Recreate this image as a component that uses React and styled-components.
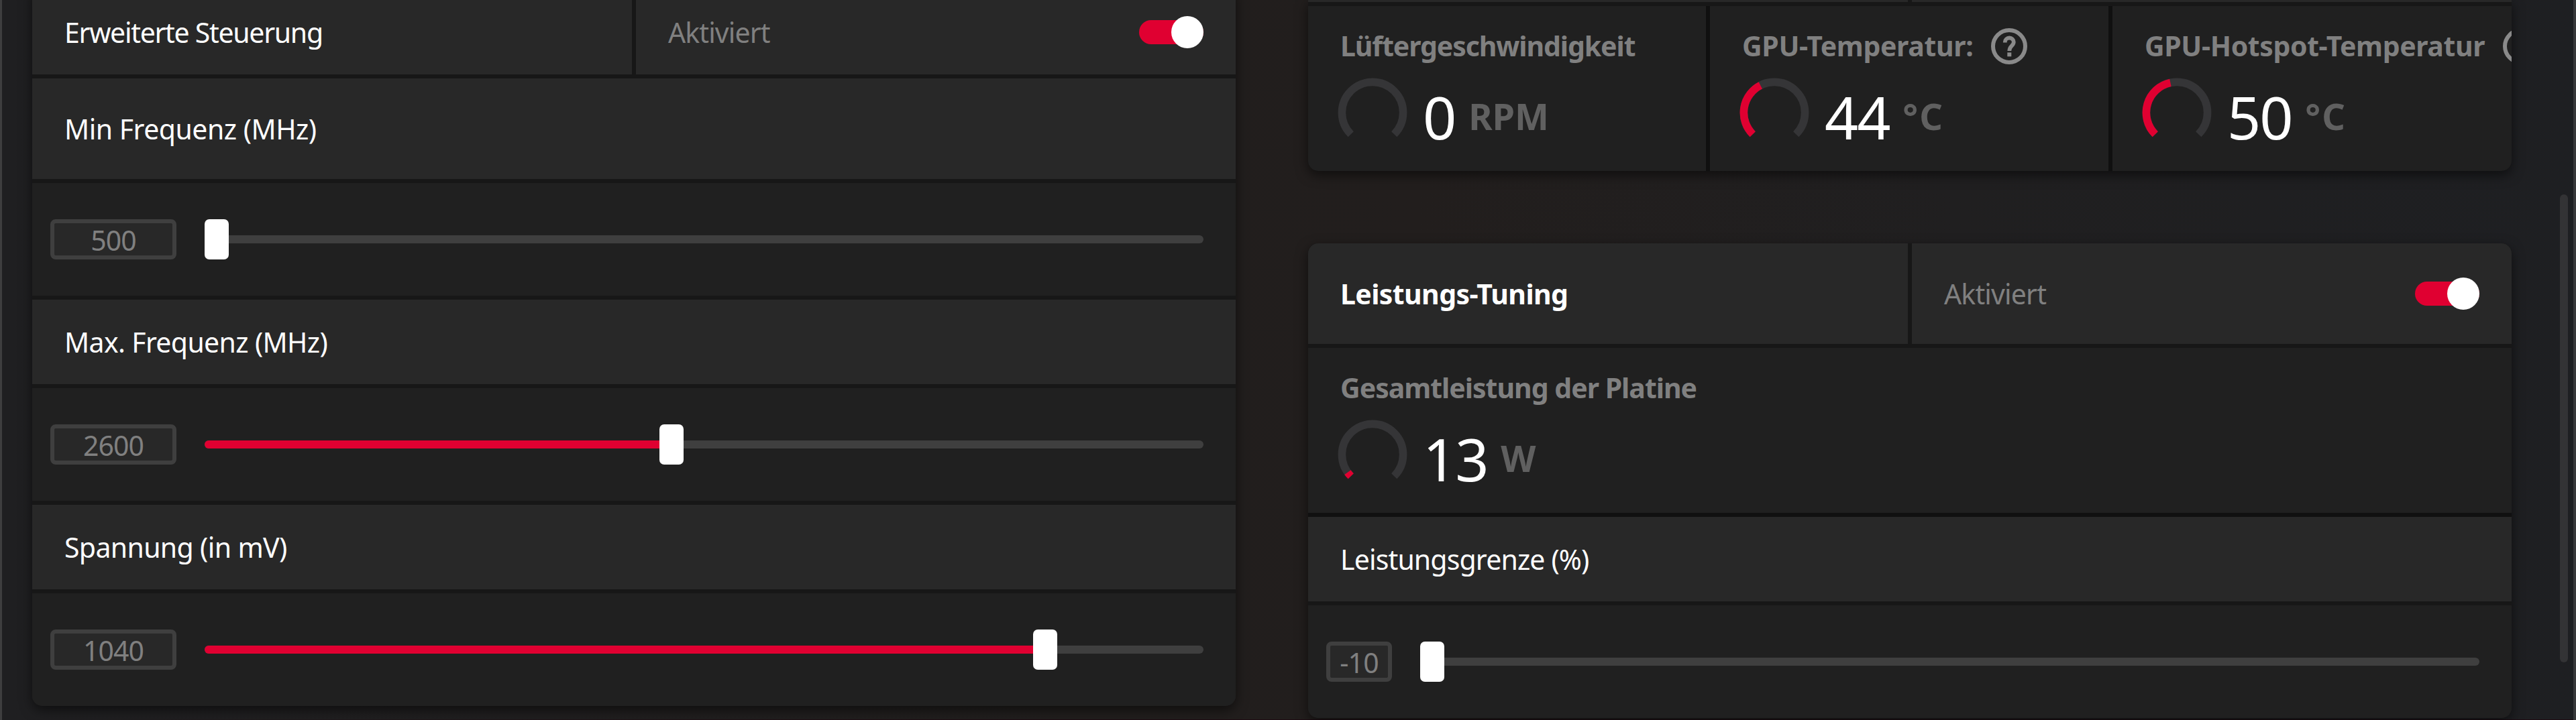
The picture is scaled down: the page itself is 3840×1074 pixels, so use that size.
import React, { useState } from "react";
import styled, { createGlobalStyle } from "styled-components";

const GlobalStyle = createGlobalStyle`
  body {
    margin: 0;
    background: #1f1e20;
  }

  * {
    box-sizing: border-box;
  }
`

const Window = styled.div`
  display: flex;
  align-items: flex-start;
  width: 3840px;
  height: 1074px;
  padding-left: 45px;
  border-left: 3px solid #3e3e3f;
  border-right: 4px solid #38383a;
  overflow: hidden;
  font-family: 'Noto Sans', 'Open Sans', sans-serif;
  font-size: 41px;
  color: #fff;
  background:
    linear-gradient(90deg, transparent 0%, #1d0a11 40%, #1d0a11 100%) bottom / 100% 1px no-repeat,
    linear-gradient(90deg, #1f1f21 0%, #211e1d 42%, #221e1d 55%, #201f20 76%, #1e1f22 100%);
`

const Column = styled.div`
  display: flex;
  flex-direction: column;
  gap: 108px;
  width: 1794px;
  margin-right: ${props => props.$last ? '72px' : '108px'};
`

const Panel = styled.section`
  border-radius: ${props => props.$scrolled ? '0 0 15px 15px' : '15px'};
  margin-top: ${props => props.$offset || 0}px;
  background: #202020;
  box-shadow: 0 6px 18px rgba(0, 0, 0, 0.55);
  overflow: hidden;
`

const HeaderRow = styled.div`
  display: grid;
  grid-template-columns: 894px 894px;
  column-gap: 6px;
  height: ${props => props.$height}px;
  background: #171717;
  border-bottom: 6px solid #171717;
`

const HeaderCell = styled.div`
  display: flex;
  align-items: center;
  justify-content: space-between;
  padding: 0 48px;
  background: #282828;
`

const TitleRow = styled.div`
  display: flex;
  align-items: center;
  height: ${props => props.$height}px;
  padding: 0 48px;
  background: #282828;
  border-bottom: 6px solid #171717;
`

const Text = styled.span`
  line-height: 60px;
  white-space: nowrap;
  font-weight: ${props => props.$bold ? 700 : 400};
  letter-spacing: ${props => props.$track || 0}px;
  color: ${props => props.$muted ? '#808080' : '#fff'};
`

const Switch = styled.button`
  display: flex;
  align-items: center;
  justify-content: flex-end;
  width: 96px;
  height: 36px;
  padding: 0;
  border: none;
  border-radius: 18px;
  background: #e00031;
`

const SwitchKnob = styled.span`
  flex: none;
  width: 48px;
  height: 48px;
  border-radius: 50%;
  background: #fff;
`

const SliderRow = styled.div`
  display: flex;
  align-items: center;
  gap: 42px;
  height: ${props => props.$last ? 168 : 174}px;
  padding: 0 48px 0 27px;
  background: #202020;
  border-bottom: ${props => props.$last ? 'none' : '6px solid #171717'};
`

const ValueBox = styled.div`
  width: ${props => props.$width}px;
  height: 60px;
  padding-top: 1px;
  border: 6px solid #3f3f3f;
  border-radius: 8px;
  background: #282828;
  color: #808080;
  line-height: 48px;
  text-align: center;
  letter-spacing: -0.9px;
`

const Track = styled.div`
  position: relative;
  flex: 1;
  height: 12px;
  border-radius: 6px;
  background: #3f3f3f;
`

const Fill = styled.div`
  height: 12px;
  border-radius: 6px 0 0 6px;
  background: #e00031;
`

const Thumb = styled.div`
  position: absolute;
  top: -24px;
  width: 36px;
  height: 60px;
  border-radius: 7px;
  background: #fff;
`

const Metrics = styled.div`
  display: grid;
  grid-template-columns: ${props => props.$columns};
  column-gap: 6px;
  height: ${props => props.$last ? 246 : 252}px;
  background: #101010;
  border-bottom: ${props => props.$last ? 'none' : '6px solid #101010'};
`

const MetricCell = styled.div`
  padding: 29px 0 0 48px;
  background: #202020;
  overflow: hidden;
`

const MetricLabel = styled.div`
  display: flex;
  align-items: center;
  height: 60px;
`

const Readout = styled.div`
  display: flex;
  align-items: flex-start;
  margin: 18px 0 0 -4px;
`

const Value = styled.span`
  margin: 6px 0 0 23px;
  font-size: 88px;
  line-height: 104px;
  letter-spacing: -2.2px;
`

const Unit = styled.span`
  margin: 5px 0 0 20px;
  font-size: 54px;
  font-weight: 700;
  line-height: 104px;
  letter-spacing: ${props => props.$track || 0}px;
  color: #606060;
`

const HelpSvg = styled.svg`
  flex: none;
  width: 54px;
  height: 54px;
  margin: 2px 0 0 27px;
`

const ScrollThumb = styled.div`
  width: 12px;
  height: 698px;
  margin-top: 290px;
  border-radius: 6px;
  background: #333335;
`


const Toggle = () => {
  const [on, setOn] = useState(true)

  return (
    <Switch aria-pressed={on} onClick={() => setOn(!on)}>
      <SwitchKnob />
    </Switch>
  )
}

const Slider = ({ value, position, width = 188, last }) => {
  const left = `calc((100% - 36px) * ${position})`

  return (
    <SliderRow $last={last}>
      <ValueBox $width={width}>{value}</ValueBox>
      <Track>
        <Fill style={{ width: left }} />
        <Thumb style={{ left }} />
      </Track>
    </SliderRow>
  )
}

const point = (deg) => {
  const rad = (deg * Math.PI) / 180
  return `${52 + 45.6 * Math.sin(rad)} ${52 - 45.6 * Math.cos(rad)}`
}

// open ring of 270 degrees, filled clockwise from the lower left
const Gauge = ({ level }) => {
  const end = -135 + 270 * level

  return (
    <svg width="104" height="104" viewBox="0 0 104 104" fill="none" strokeWidth="11.6">
      <path d={`M${point(-135)}A45.6 45.6 0 1 1 ${point(135)}`} stroke="#353537" />
      {level > 0 && (
        <path d={`M${point(-135)}A45.6 45.6 0 0 1 ${point(end)}`} stroke="#e00031" />
      )}
    </svg>
  )
}

const HelpIcon = () => (
  <HelpSvg viewBox="0 0 54 54" fill="none" stroke="#8a8a8a">
    <circle cx="27" cy="27" r="24" strokeWidth="6" />
    <path d="M20.8 21.4v-.6a6.5 6.3 0 0 1 13 0c0 5.4-6.5 6-6.5 13.2" strokeWidth="5.8" />
    <path d="M24.3 39.3h6" strokeWidth="6" />
  </HelpSvg>
)

const Metric = ({ label, track, value, unit, unitTrack, level, help }) => (
  <MetricCell>
    <MetricLabel>
      <Text $bold $muted $track={track}>{label}</Text>
      {help && <HelpIcon />}
    </MetricLabel>
    <Readout>
      <Gauge level={level} />
      <Value>{value}</Value>
      <Unit $track={unitTrack}>{unit}</Unit>
    </Readout>
  </MetricCell>
)


const App = () => {
  return (
    <>
      <GlobalStyle />
      <Window>
        <Column>
          <Panel $scrolled $offset={-15}>
            <HeaderRow $height={132}>
              <HeaderCell>
                <Text $track={-1.3}>Erweiterte Steuerung</Text>
              </HeaderCell>
              <HeaderCell>
                <Text $muted $track={-0.9}>Aktiviert</Text>
                <Toggle />
              </HeaderCell>
            </HeaderRow>
            <TitleRow $height={156}>
              <Text $track={-0.5}>Min Frequenz (MHz)</Text>
            </TitleRow>
            <Slider value="500" position={0} />
            <TitleRow $height={132}>
              <Text $track={-0.65}>Max. Frequenz (MHz)</Text>
            </TitleRow>
            <Slider value="2600" position={0.4668} />
            <TitleRow $height={132}>
              <Text $track={-0.65}>Spannung (in mV)</Text>
            </TitleRow>
            <Slider value="1040" position={0.85} last />
          </Panel>
        </Column>

        <Column $last>
          <Panel $scrolled>
            <HeaderRow $height={9}>
              <HeaderCell />
              <HeaderCell />
            </HeaderRow>
            <Metrics $columns="593px 594px 595px" $last>
              <Metric label="Lüftergeschwindigkeit" track={-1.1} value="0" unit="RPM" level={0} />
              <Metric label="GPU-Temperatur:" track={-0.35} value="44" unit="°C" unitTrack={2} level={0.4} help />
              <Metric label="GPU-Hotspot-Temperatur" track={-0.4} value="50" unit="°C" unitTrack={2} level={0.455} help />
            </Metrics>
          </Panel>

          <Panel>
            <HeaderRow $height={156}>
              <HeaderCell>
                <Text $bold $track={-0.6}>Leistungs-Tuning</Text>
              </HeaderCell>
              <HeaderCell>
                <Text $muted $track={-0.85}>Aktiviert</Text>
                <Toggle />
              </HeaderCell>
            </HeaderRow>
            <Metrics $columns="1fr">
              <Metric label="Gesamtleistung der Platine" track={-1} value="13" unit="W" level={0.035} />
            </Metrics>
            <TitleRow $height={132}>
              <Text $track={-0.85}>Leistungsgrenze (%)</Text>
            </TitleRow>
            <Slider value="-10" position={0} width={98} last />
          </Panel>
        </Column>

        <ScrollThumb />
      </Window>
    </>
  )
}

export default App;
